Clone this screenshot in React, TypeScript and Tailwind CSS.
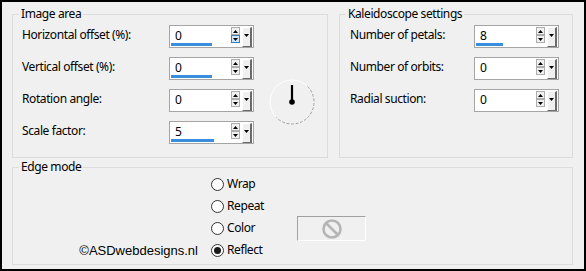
import React from "react";

function Up() {
  return (
    <svg width="5" height="3" viewBox="0 0 5 3" className="block">
      <path d="M0 3 L2.5 0 L5 3 Z" fill="#000" />
    </svg>
  );
}
function Down() {
  return (
    <svg width="5" height="3" viewBox="0 0 5 3" className="block">
      <path d="M0 0 L5 0 L2.5 3 Z" fill="#000" />
    </svg>
  );
}

function Spin({ value, bar, hover }: { value: string; bar?: string; hover?: boolean }) {
  return (
    <div className="w-[85px] h-[23px] border border-[#a5a5a5] bg-white flex shrink-0">
      <div className="w-[61px] flex flex-col px-[1px]">
        <span className="pl-[4px] pt-[3px] text-[12px] leading-[14px] text-black">{value}</span>
        <div className="mt-auto mb-[1px] h-[3px] w-full">
          {bar ? <div className={`h-[3px] bg-[#3b8ede] ${bar}`} /> : null}
        </div>
      </div>
      <div className="flex pt-[1px]">
        <div className="flex flex-col w-[9px]">
          <div className="h-[8px] border border-[#adadad] bg-[#f0f0f0] flex items-center justify-center">
            <Up />
          </div>
          <div
            className={
              hover
                ? "h-[8px] border border-[#3c7fb1] bg-[#cfe6fb] flex items-center justify-center"
                : "h-[8px] border border-[#adadad] bg-[#f0f0f0] flex items-center justify-center"
            }
          >
            <Down />
          </div>
        </div>
        <div className="ml-[2px] w-[10px] h-[20px] border-t border-l border-white border-r-2 border-r-[#6a6a6a] border-b border-b-[#6a6a6a] bg-[#f0f0f0] flex items-start justify-center pt-[6px]">
          <Down />
        </div>
      </div>
    </div>
  );
}

function Row({ label, labelW, children }: { label: string; labelW: string; children: React.ReactNode }) {
  return (
    <div className="flex items-center h-[23px]">
      <span className={`${labelW} -mt-[3px] text-[12px] leading-[16px] tracking-[-0.4px] text-black`}>{label}</span>
      {children}
    </div>
  );
}

function Radio({ label, checked }: { label: string; checked?: boolean }) {
  return (
    <div className="h-[22px] flex items-center gap-[3px]">
      <div className="w-[13px] h-[13px] rounded-full border border-[#333] bg-white flex items-center justify-center">
        {checked ? <div className="w-[7px] h-[7px] rounded-full bg-[#1a1a1a]" /> : null}
      </div>
      <span className="text-[12px] leading-[16px] tracking-[-0.4px] text-black -mt-[1px]">{label}</span>
    </div>
  );
}

function Dial() {
  return (
    <svg width="46" height="46" viewBox="0 0 46 46" className="block">
      <circle cx="23" cy="23" r="22" fill="none" stroke="#ffffff" strokeWidth="1" />
      <path
        d="M38.56 7.44 A22 22 0 0 1 7.44 38.56"
        fill="none"
        stroke="#9a9a9a"
        strokeWidth="1"
        strokeDasharray="3 1.5"
      />
      <line x1="23" y1="23" x2="23" y2="6" stroke="#000" strokeWidth="2.2" />
      <circle cx="23" cy="23" r="2.8" fill="#000" />
    </svg>
  );
}

function NoIcon() {
  return (
    <svg width="22" height="22" viewBox="0 0 22 22" className="block">
      <circle cx="11" cy="11" r="8.5" fill="none" stroke="#b5b5b5" strokeWidth="2.6" />
      <line x1="5" y1="5" x2="17" y2="17" stroke="#b5b5b5" strokeWidth="2.6" />
    </svg>
  );
}

export default function App() {
  return (
    <div className="w-[586px] h-[271px] border-2 border-black bg-[#f0f0f0] font-['Noto_Sans',sans-serif] text-[12px] text-black pl-[10px] pr-[11px] pt-[12px] flex flex-col">
      <div className="flex gap-[11px]">
        {/* Image area */}
        <div className="relative w-[316px] h-[144px] border border-[#dcdcdc] pt-[10px] pl-[9px] flex">
          <span className="absolute -top-[9px] left-[6px] px-[2px] bg-[#f0f0f0] leading-[16px] tracking-[-0.4px]">Image area</span>
          <div className="flex flex-col gap-[9px]">
            <Row label="Horizontal offset (%):" labelW="w-[147px]">
              <Spin value="0" bar="w-[41px]" hover />
            </Row>
            <Row label="Vertical offset (%):" labelW="w-[147px]">
              <Spin value="0" bar="w-[41px]" />
            </Row>
            <Row label="Rotation angle:" labelW="w-[147px]">
              <Spin value="0" />
            </Row>
            <Row label="Scale factor:" labelW="w-[147px]">
              <Spin value="5" bar="w-[43px]" />
            </Row>
          </div>
          <div className="ml-[15px] mt-[54px]">
            <Dial />
          </div>
        </div>
        {/* Kaleidoscope settings */}
        <div className="relative w-[234px] h-[144px] border border-[#dcdcdc] pt-[10px] pl-[10px] flex flex-col gap-[9px]">
          <span className="absolute -top-[9px] left-[6px] px-[2px] bg-[#f0f0f0] leading-[16px] tracking-[-0.4px]">Kaleidoscope settings</span>
          <Row label="Number of petals:" labelW="w-[124px]">
            <Spin value="8" bar="w-[27px]" />
          </Row>
          <Row label="Number of orbits:" labelW="w-[124px]">
            <Spin value="0" />
          </Row>
          <Row label="Radial suction:" labelW="w-[124px]">
            <Spin value="0" />
          </Row>
        </div>
      </div>
      {/* Edge mode */}
      <div className="relative mt-[9px] h-[98px] border border-[#dcdcdc] flex">
        <span className="absolute -top-[9px] left-[6px] px-[2px] bg-[#f0f0f0] leading-[16px] tracking-[-0.4px]">Edge mode</span>
        <div className="w-[198px] flex flex-col justify-end pb-[2px]">
          <div className="h-[22px] flex items-center justify-end pr-[13px]">
            <span className="font-['Liberation_Sans',Arial,sans-serif] text-[13px] leading-[16px] text-black">
              ©ASDwebdesigns.nl
            </span>
          </div>
        </div>
        <div className="w-[86px] pt-[5px] flex flex-col">
          <Radio label="Wrap" />
          <Radio label="Repeat" />
          <Radio label="Color" />
          <Radio label="Reflect" checked />
        </div>
        <div className="mt-[48px] w-[69px] h-[25px] border-t border-l border-[#a0a0a0] border-r border-r-white border-b border-b-white flex items-center justify-center">
          <NoIcon />
        </div>
      </div>
    </div>
  );
}
